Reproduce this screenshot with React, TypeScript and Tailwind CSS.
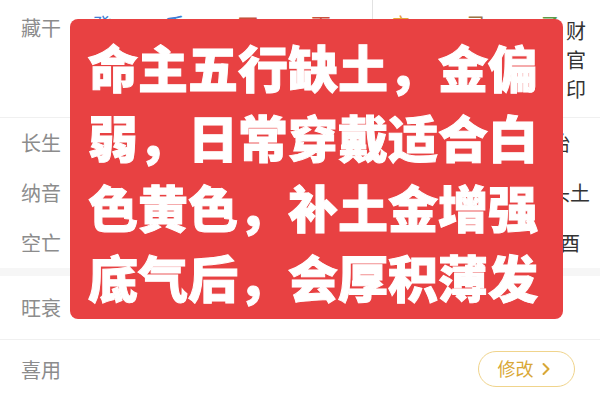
import type { ReactElement } from "react";
import { ChevronRight } from "lucide-react";

interface Stem {
  char: string;
  color: string;
  gods: string[];
}

const groupA: Stem[] = [
  { char: "癸", color: "text-[#3f7fd6]", gods: ["伤", "官"] },
  { char: "壬", color: "text-[#3f7fd6]", gods: ["食", "神"] },
  { char: "丁", color: "text-[#c9503c]", gods: ["正", "财"] },
  { char: "丙", color: "text-[#c9503c]", gods: ["偏", "财"] },
];

const groupB: Stem[] = [
  { char: "辛", color: "text-[#e6a23c]", gods: ["比", "肩"] },
  { char: "己", color: "text-[#9a7446]", gods: ["正", "印"] },
  { char: "乙", color: "text-[#5c9a48]", gods: ["财", "官", "印"] },
];

const rows = [
  { label: "长生", values: ["帝旺", "沐浴", "长生", "胎"] },
  { label: "纳音", values: ["涧下水", "炉中火", "杨柳木", "城头土"] },
  { label: "空亡", values: ["戌亥", "子丑", "寅卯", "申酉"] },
];

const lines = [
  "命主五行缺土，金偏",
  "弱，日常穿戴适合白",
  "色黄色，补土金增强",
  "底气后，会厚积薄发",
];

function StemItem({ stem }: { stem: Stem }): ReactElement {
  return (
    <div className="flex gap-[5px]">
      <span className={`-mt-[4px] w-[20px] text-[20px] leading-[28px] ${stem.color}`}>
        {stem.char}
      </span>
      <div className="mt-[1px] flex w-[20px] flex-col text-[20px] leading-[29px] text-[#333]">
        {stem.gods.map((g, i) => (
          <span key={i}>{g}</span>
        ))}
      </div>
    </div>
  );
}

export default function App(): ReactElement {
  return (
    <div className="relative h-[400px] w-[600px] overflow-hidden bg-white font-['Noto_Sans_CJK_SC',sans-serif]">
      <div className="flex h-[118px] border-b border-[#f0f0f0]">
        <span className="w-[92px] shrink-0 pl-[21px] pt-[14px] text-[20px] leading-[28px] text-[#8c8c8c]">
          藏干
        </span>
        <div className="flex w-[280px] gap-[28px] pt-[15px]">
          {groupA.map((s) => (
            <StemItem key={s.char} stem={s} />
          ))}
        </div>
        <div className="flex flex-1 gap-[30px] border-l border-[#e2e2e2] pl-[18px] pt-[15px]">
          {groupB.map((s) => (
            <StemItem key={s.char} stem={s} />
          ))}
        </div>
      </div>

      {rows.map((row) => (
        <div key={row.label} className="flex h-[50px] items-center">
          <span className="w-[92px] shrink-0 pl-[21px] text-[20px] text-[#8c8c8c]">
            {row.label}
          </span>
          <div className="grid flex-1 grid-cols-[1fr_1fr_1fr_72px] pr-[4px] text-center text-[20px] text-[#333]">
            {row.values.map((v, i) => (
              <span key={i} className="whitespace-nowrap">
                {v}
              </span>
            ))}
          </div>
        </div>
      ))}

      <div className="h-[8px] bg-[#f6f6f6]" />

      <div className="flex h-[64px] items-center border-b border-[#f0f0f0]">
        <span className="pl-[21px] text-[20px] text-[#8c8c8c]">旺衰</span>
      </div>

      <div className="flex h-[60px] items-center justify-between pr-[25px]">
        <span className="pl-[21px] text-[20px] text-[#8c8c8c]">喜用</span>
        <button
          type="button"
          className="-mt-[3px] flex h-[36px] w-[97px] items-center justify-center gap-[2px] rounded-full border border-[#f0d48c] text-[18px] text-[#d9a837]"
        >
          修改
          <ChevronRight className="size-[20px]" strokeWidth={2.5} />
        </button>
      </div>

      <div className="absolute left-[70px] top-[19px] h-[300px] w-[493px] rounded-[8px] bg-[#e84142] pl-[18px] pt-[12px] text-[50px] font-black leading-[70px] text-white [-webkit-text-stroke:1px_white]">
        {lines.map((line) => (
          <div key={line} className="whitespace-nowrap">
            {line}
          </div>
        ))}
      </div>
    </div>
  );
}
